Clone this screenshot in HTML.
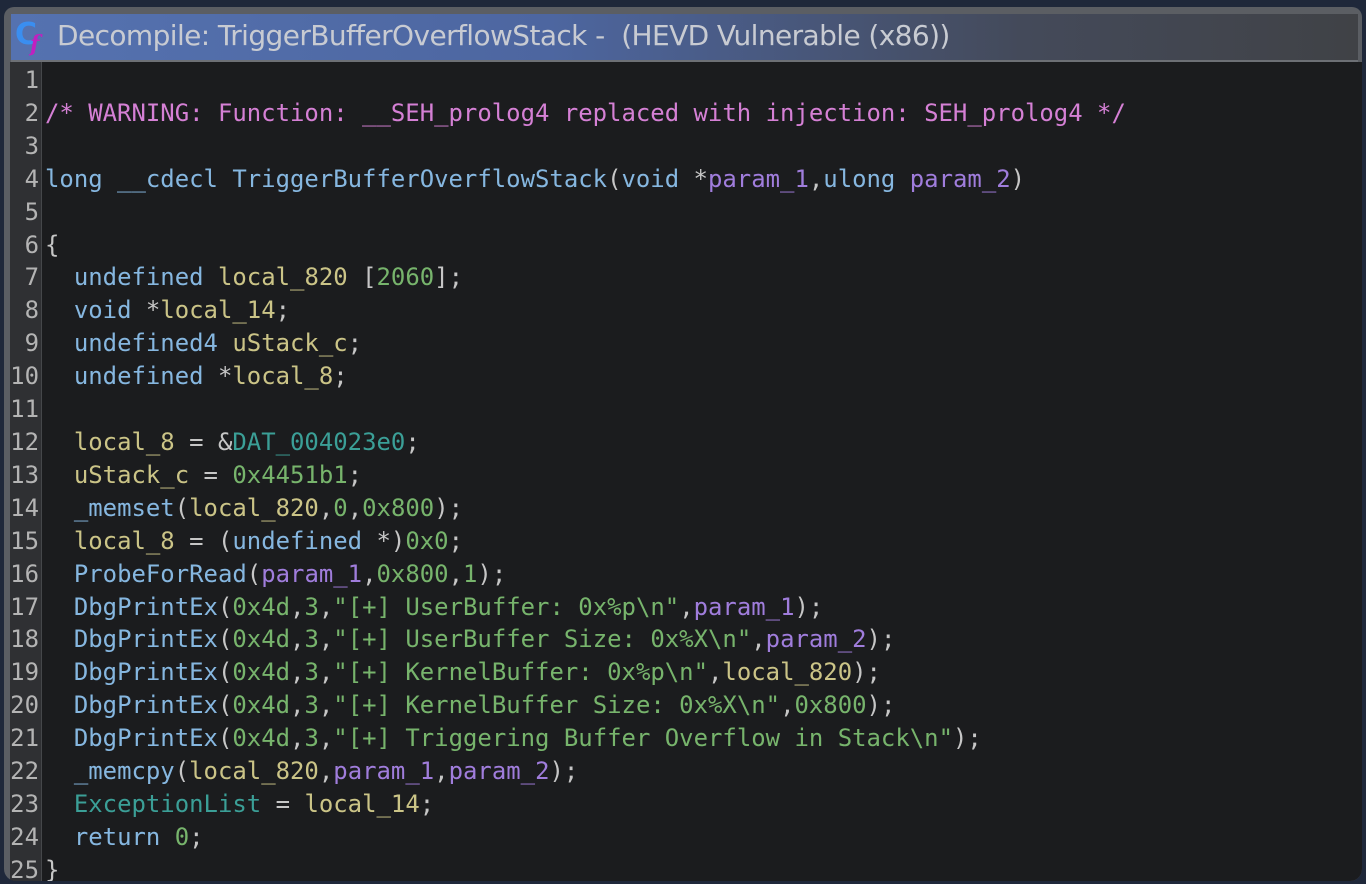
<!DOCTYPE html>
<html><head><meta charset="utf-8"><style>
html,body{margin:0;padding:0;width:1366px;height:884px;background:#1f283a;overflow:hidden}
.win{position:absolute;left:4px;top:7px;width:1358px;height:874px;background:#5b5e63;border-radius:10px 10px 12px 12px;overflow:hidden}
.title{position:absolute;left:7px;top:7px;right:4px;height:46px;background:linear-gradient(90deg,#5572b0 0%,#4d66a0 40%,#444a5a 75%,#404246 100%);border-bottom:2px solid #6d7075}
.title span{position:absolute;left:46px;top:5px;font:28px "DejaVu Sans","Liberation Sans",sans-serif;color:#c8cbd2;letter-spacing:-0.6px;white-space:pre}
.ic{position:absolute;left:4px;top:3px;font:bold 30px "DejaVu Sans",sans-serif;color:#3a8ef0}
.ic2{position:absolute;left:19px;top:17px;font:italic bold 22px "DejaVu Serif",serif;color:#c020c0}
.code{position:absolute;left:6px;top:55px;right:0;bottom:0;background:#1b1c1e}
.gut{position:absolute;left:0;top:0;width:31px;bottom:0;background:#2f3033;border-right:1px solid #45474a}
pre{margin:0;position:absolute;top:2px;font:23.95px/32.9px "DejaVu Sans Mono","Liberation Mono",monospace;color:#c6c6c6}
.n{left:0;width:29px;text-align:right;color:#b4b4b4}
.t{left:35px}
.c{color:#d580d5}.b{color:#86b7e0}.y{color:#cbc487}.g{color:#77b46c}.p{color:#a07ddc}.q{color:#3b9f97}
</style></head><body>
<div class="win">
<div class="title"><div class="ic">C</div><div class="ic2">f</div><span>Decompile: TriggerBufferOverflowStack -  (HEVD Vulnerable (x86))</span></div>
<div class="code"><div class="gut"></div>
<pre class="n">1
2
3
4
5
6
7
8
9
10
11
12
13
14
15
16
17
18
19
20
21
22
23
24
25</pre>
<pre class="t">

<span class="c">/* WARNING: Function: __SEH_prolog4 replaced with injection: SEH_prolog4 */</span>

<span class="b">long __cdecl TriggerBufferOverflowStack</span>(<span class="b">void</span> *<span class="p">param_1</span>,<span class="b">ulong</span> <span class="p">param_2</span>)

{
  <span class="b">undefined</span> <span class="y">local_820</span> [<span class="g">2060</span>];
  <span class="b">void</span> *<span class="y">local_14</span>;
  <span class="b">undefined4</span> <span class="y">uStack_c</span>;
  <span class="b">undefined</span> *<span class="y">local_8</span>;

  <span class="y">local_8</span> = &amp;<span class="q">DAT_004023e0</span>;
  <span class="y">uStack_c</span> = <span class="g">0x4451b1</span>;
  <span class="b">_memset</span>(<span class="y">local_820</span>,<span class="g">0</span>,<span class="g">0x800</span>);
  <span class="y">local_8</span> = (<span class="b">undefined</span> *)<span class="g">0x0</span>;
  <span class="b">ProbeForRead</span>(<span class="p">param_1</span>,<span class="g">0x800</span>,<span class="g">1</span>);
  <span class="b">DbgPrintEx</span>(<span class="g">0x4d</span>,<span class="g">3</span>,<span class="g">"[+] UserBuffer: 0x%p\n"</span>,<span class="p">param_1</span>);
  <span class="b">DbgPrintEx</span>(<span class="g">0x4d</span>,<span class="g">3</span>,<span class="g">"[+] UserBuffer Size: 0x%X\n"</span>,<span class="p">param_2</span>);
  <span class="b">DbgPrintEx</span>(<span class="g">0x4d</span>,<span class="g">3</span>,<span class="g">"[+] KernelBuffer: 0x%p\n"</span>,<span class="y">local_820</span>);
  <span class="b">DbgPrintEx</span>(<span class="g">0x4d</span>,<span class="g">3</span>,<span class="g">"[+] KernelBuffer Size: 0x%X\n"</span>,<span class="g">0x800</span>);
  <span class="b">DbgPrintEx</span>(<span class="g">0x4d</span>,<span class="g">3</span>,<span class="g">"[+] Triggering Buffer Overflow in Stack\n"</span>);
  <span class="b">_memcpy</span>(<span class="y">local_820</span>,<span class="p">param_1</span>,<span class="p">param_2</span>);
  <span class="q">ExceptionList</span> = <span class="y">local_14</span>;
  <span class="b">return</span> <span class="g">0</span>;
}</pre>
</div></div>
</body></html>
